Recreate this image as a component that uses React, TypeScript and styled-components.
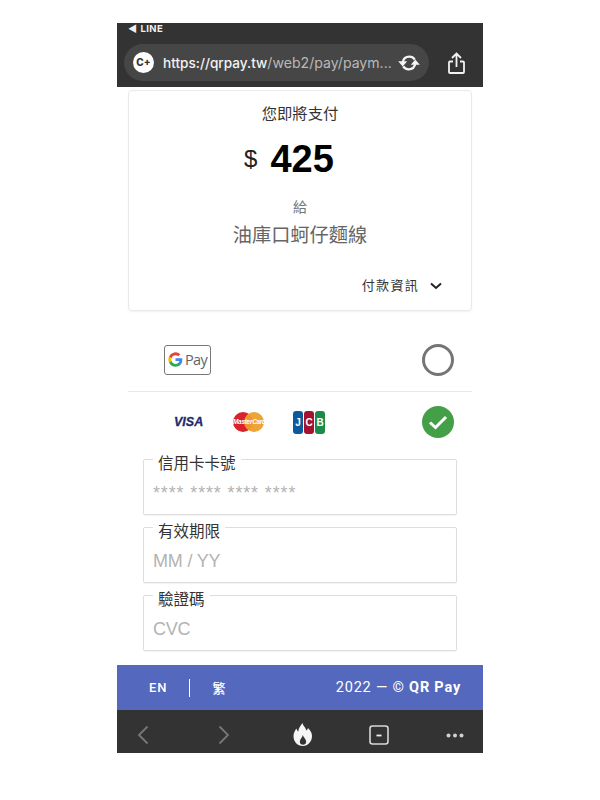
import styled, { createGlobalStyle } from 'styled-components'

const CJK = `"Liberation Sans", "Noto Sans CJK TC", sans-serif`

const GlobalStyle = createGlobalStyle`
  html, body {
    margin: 0;
    padding: 0;
    background: #fff;
    font-family: ${CJK};
  }
`

const Phone = styled.div`
  width: 366px;
  margin: 23px auto 0;
  display: flex;
  flex-direction: column;
`

const TopBar = styled.header`
  height: 64px;
  box-sizing: border-box;
  background: #333;
  padding: 0 7px;
`

const BackLine = styled.div`
  height: 21px;
  display: flex;
  align-items: flex-start;
  gap: 3px;
  padding-left: 4px;
  font-family: "Inter", sans-serif;
  font-size: 9.5px;
  line-height: 12px;
  font-weight: 700;
  letter-spacing: 0.4px;
  color: #f0f0f0;
`

const BarRow = styled.div`
  display: flex;
  align-items: center;
`

const UrlPill = styled.div`
  width: 305px;
  height: 37px;
  box-sizing: border-box;
  background: #464646;
  border-radius: 19px;
  display: flex;
  align-items: center;
  padding: 0 9px;
`

const Favicon = styled.span`
  width: 21px;
  height: 21px;
  border-radius: 50%;
  background: #fff;
  color: #333;
  font-family: "Inter", sans-serif;
  font-size: 10px;
  font-weight: 800;
  line-height: 21px;
  text-align: center;
  flex: none;
`

const Url = styled.div`
  margin-left: 9px;
  width: 236px;
  white-space: nowrap;
  font-family: "Inter", sans-serif;
  font-size: 14.1px;
  color: #b9b9b9;
  b {
    font-size: 13.6px;
    font-weight: 500;
    color: #f2f2f2;
  }
`

const BarIcon = styled.svg`
  display: block;
  flex: none;
`

const ShareButton = styled.div`
  margin-left: 19px;
  display: flex;
`

const Content = styled.main`
  padding: 3px 11px 0;
  display: flex;
  flex-direction: column;
`

const SummaryCard = styled.section`
  height: 221px;
  margin-bottom: 20px;
  box-sizing: border-box;
  border: 1px solid #e9e9e9;
  border-radius: 4px;
  box-shadow: 0 1px 2px rgba(0, 0, 0, 0.06);
  display: flex;
  flex-direction: column;
  align-items: center;
  padding-top: 13px;
`

const Lead = styled.div`
  font-size: 15.3px;
  line-height: 20px;
  color: #333;
`

const Amount = styled.div`
  margin: 15px 22px 0 0;
  display: flex;
  align-items: center;
  gap: 13px;
  height: 40px;
`

const Currency = styled.span`
  font-size: 24px;
  color: #222;
`

const Figure = styled.span`
  font-size: 38px;
  font-weight: 700;
  color: #000;
`

const To = styled.div`
  margin-top: 18px;
  font-size: 14px;
  line-height: 20px;
  color: #777;
`

const Merchant = styled.div`
  margin-top: 5px;
  font-size: 19.2px;
  line-height: 28px;
  color: #666;
`

const Details = styled.div`
  margin-top: 26px;
  align-self: flex-end;
  padding-right: 29px;
  display: flex;
  align-items: center;
  gap: 11px;
  font-size: 13px;
  line-height: 20px;
  letter-spacing: 1.3px;
  color: #333;
`

const PayRow = styled.div<{ $height: number; $divider?: boolean }>`
  height: ${({ $height }) => $height}px;
  box-sizing: border-box;
  display: flex;
  align-items: center;
  justify-content: space-between;
  padding: 0 18px ${({ $divider }) => ($divider ? '3px' : '0')} 36px;
  border-bottom: ${({ $divider }) => ($divider ? '1.5px solid #e8e8e8' : 'none')};
`

const GPayBadge = styled.div`
  width: 47px;
  height: 30px;
  box-sizing: border-box;
  border: 1px solid #777;
  border-radius: 3px;
  display: flex;
  align-items: center;
  justify-content: center;
  gap: 2px;
  font-family: "Open Sans", sans-serif;
  font-size: 14.5px;
  letter-spacing: -0.7px;
  color: #5f6368;
`

const Radio = styled.div`
  width: 32px;
  height: 32px;
  box-sizing: border-box;
  border: 3px solid #757575;
  border-radius: 50%;
`

const Brands = styled.div`
  display: flex;
  align-items: center;
  margin-left: 10px;
`

const Visa = styled.span`
  width: 30px;
  font-size: 12.5px;
  font-weight: 700;
  font-style: italic;
  -webkit-text-stroke: 0.3px #1f2a6b;
  color: #1f2a6b;
`

const MasterCard = styled.div`
  margin-left: 29px;
  width: 31px;
  height: 20px;
  position: relative;
  &::before, &::after {
    content: '';
    position: absolute;
    top: 0;
    width: 20px;
    height: 20px;
    border-radius: 50%;
  }
  &::before { left: 0; background: #d9222a; }
  &::after { right: 0; background: #ee9f2d; opacity: 0.95; }
  span {
    position: absolute;
    z-index: 1;
    left: 0;
    top: 6px;
    width: 31px;
    text-align: center;
    font-size: 6.5px;
    line-height: 8px;
    font-style: italic;
    font-weight: 700;
    letter-spacing: -0.3px;
    color: #fff;
    white-space: nowrap;
  }
`

const Jcb = styled.div`
  margin-left: 29px;
  display: flex;
  gap: 1px;
`

const JcbStripe = styled.span<{ $bg: string }>`
  width: 10px;
  height: 23px;
  border-radius: 3px;
  background: ${({ $bg }) => $bg};
  color: #fff;
  font-size: 10px;
  font-weight: 700;
  line-height: 23px;
  text-align: center;
`

const Fields = styled.div`
  margin: -4px 15px 0;
  display: flex;
  flex-direction: column;
  gap: 1px;
`

const Field = styled.fieldset`
  margin: 0;
  height: 67px;
  box-sizing: border-box;
  padding: 0 9px;
  border: 1px solid #ddd;
  border-radius: 2px;
  box-shadow: 0 1px 1px rgba(0, 0, 0, 0.05);
`

const Legend = styled.legend`
  margin-left: 0;
  padding: 8px 5px 0;
  font-size: 15.5px;
  line-height: 15px;
  color: #333;
`

const Placeholder = styled.div<{ $mask?: boolean }>`
  margin-top: 9px;
  font-size: 18px;
  line-height: 26px;
  letter-spacing: ${({ $mask }) => ($mask ? '0.85px' : '-0.2px')};
  color: #b3b3b3;
`

const Footer = styled.footer`
  margin-top: 14px;
  height: 45px;
  box-sizing: border-box;
  background: #5468bd;
  color: #fff;
  display: flex;
  align-items: center;
  padding: 0 22px 0 32px;
  font-family: "Roboto", "Noto Sans CJK TC", sans-serif;
`

const Lang = styled.span`
  font-size: 13px;
  font-weight: 500;
  letter-spacing: 1px;
`

const LangDivider = styled.span`
  width: 1px;
  height: 18px;
  background: #fff;
  margin: 0 23px 0 21px;
`

const Copyright = styled.div`
  margin-left: auto;
  font-size: 14.5px;
  letter-spacing: 0.8px;
  b {
    font-weight: 700;
  }
`

const BottomBar = styled.nav`
  height: 43px;
  box-sizing: border-box;
  padding: 7px 0 0 20px;
  background: #333;
  display: flex;
  align-items: center;
`

const NavSlot = styled.span<{ $gap: number }>`
  display: flex;
  margin-left: ${({ $gap }) => $gap}px;
`

export default function App() {
  return (
    <>
      <GlobalStyle />
      <Phone>
        <TopBar>
          <BackLine><span>◀</span> LINE</BackLine>
          <BarRow>
            <UrlPill>
              <Favicon>C+</Favicon>
              <Url><b>https://qrpay.tw</b>/web2/pay/paym...</Url>
              <BarIcon width="22" height="18" viewBox="0 0 24 20" fill="none">
                <path d="M5 9.500C5.600 5.500 8.600 3 12.400 3c2.700 0 4.700 1.200 6 3.200" stroke="#f5f5f5" strokeWidth="2.600" />
                <path d="M19 10.500c-.6 4-3.600 6.500-7.400 6.500-2.700 0-4.700-1.200-6-3.200" stroke="#f5f5f5" strokeWidth="2.600" />
                <path d="M0 8h10l-5 6zM24 12H14l5-6z" fill="#f5f5f5" />
              </BarIcon>
            </UrlPill>
            <ShareButton>
              <BarIcon width="17" height="22" viewBox="0 0 17 22" fill="none" stroke="#f2f2f2" strokeWidth="1.800">
                <path d="M8.500 15V2M4 6l4.500-4.500L13 6" />
                <path d="M5 9.500H2a1 1 0 0 0-1 1V20a1 1 0 0 0 1 1h13a1 1 0 0 0 1-1v-9.500a1 1 0 0 0-1-1h-3" />
              </BarIcon>
            </ShareButton>
          </BarRow>
        </TopBar>
        <Content>
          <SummaryCard>
            <Lead>您即將支付</Lead>
            <Amount>
              <Currency>$</Currency>
              <Figure>425</Figure>
            </Amount>
            <To>給</To>
            <Merchant>油庫口蚵仔麵線</Merchant>
            <Details>
              付款資訊
              <svg width="12" height="8" viewBox="0 0 12 8" fill="none" stroke="#222" strokeWidth="2">
                <path d="M1 1.500l5 4.500 5-4.500" />
              </svg>
            </Details>
          </SummaryCard>
          <PayRow $height={61} $divider>
            <GPayBadge>
              <svg width="15" height="15" viewBox="0 0 24 24">
                <path d="M23 12.300c0-.8-.1-1.600-.2-2.300H12v4.400h6.200a5.300 5.300 0 0 1-2.300 3.500v2.900h3.700c2.200-2 3.400-5 3.400-8.500z" fill="#4285f4" />
                <path d="M12 23.500c3.100 0 5.700-1 7.600-2.700l-3.700-2.900c-1 .7-2.300 1.100-3.900 1.100-3 0-5.500-2-6.400-4.700H1.800v3A11.500 11.500 0 0 0 12 23.500z" fill="#34a853" />
                <path d="M5.600 14.300a6.900 6.900 0 0 1 0-4.400v-3H1.800a11.500 11.500 0 0 0 0 10.400z" fill="#fbbc04" />
                <path d="M12 5.100c1.700 0 3.200.6 4.400 1.700l3.300-3.300A11.500 11.500 0 0 0 1.800 6.900l3.800 3C6.500 7.100 9 5.100 12 5.100z" fill="#ea4335" />
              </svg>
              Pay
            </GPayBadge>
            <Radio />
          </PayRow>
          <PayRow $height={60}>
            <Brands>
              <Visa>VISA</Visa>
              <MasterCard><span>MasterCard</span></MasterCard>
              <Jcb>
                <JcbStripe $bg="#0b5a9e">J</JcbStripe>
                <JcbStripe $bg="#a3122f">C</JcbStripe>
                <JcbStripe $bg="#1b8a4b">B</JcbStripe>
              </Jcb>
            </Brands>
            <svg width="32" height="32" viewBox="0 0 32 32">
              <circle cx="16" cy="16" r="16" fill="#43a047" />
              <path d="M8 16.500l5.500 5L24 11" fill="none" stroke="#fff" strokeWidth="3" />
            </svg>
          </PayRow>
          <Fields>
            <Field>
              <Legend>信用卡卡號</Legend>
              <Placeholder $mask>**** **** **** ****</Placeholder>
            </Field>
            <Field>
              <Legend>有效期限</Legend>
              <Placeholder>MM / YY</Placeholder>
            </Field>
            <Field>
              <Legend>驗證碼</Legend>
              <Placeholder>CVC</Placeholder>
            </Field>
          </Fields>
        </Content>
        <Footer>
          <Lang>EN</Lang>
          <LangDivider />
          <Lang>繁</Lang>
          <Copyright>2022 — © <b>QR Pay</b></Copyright>
        </Footer>
        <BottomBar>
          <NavSlot $gap={0}>
            <svg width="12" height="20" viewBox="0 0 12 20" fill="none" stroke="#777" strokeWidth="1.800">
              <path d="M10.500 1.500L2 10l8.500 8.500" />
            </svg>
          </NavSlot>
          <NavSlot $gap={69}>
            <svg width="12" height="20" viewBox="0 0 12 20" fill="none" stroke="#777" strokeWidth="1.800">
              <path d="M1.500 1.500L10 10l-8.500 8.500" />
            </svg>
          </NavSlot>
          <NavSlot $gap={63}>
            <svg width="20" height="24" viewBox="0 0 20 24">
              <path
                fillRule="evenodd"
                fill="#f5f5f5"
                d="M9.500 0C10 3 13 4.500 13.200 7.500C14 7 14.800 6 15 5C17.500 7.500 19 10 19 13C19 18.500 15 23 10 23C4.500 23 .5 19 .5 13C.5 10 2 7.500 3.500 5.500C3.800 7 4.500 8 5.300 8.500C5.500 5 7.500 2.500 9.500 0ZM9.800 12C9.500 14.500 6.800 16 6.800 18.800C6.800 20.800 8.300 21.800 10 21.800C11.700 21.800 13.200 20.800 13.200 18.800C13.200 16 10.500 14.500 9.800 12Z"
              />
            </svg>
          </NavSlot>
          <NavSlot $gap={56}>
            <svg width="20" height="20" viewBox="0 0 20 20" fill="none">
              <rect x="1" y="1" width="18" height="18" rx="2.500" stroke="#d8d8d8" strokeWidth="1.600" />
              <path d="M7.500 10.500h5" stroke="#f0f0f0" strokeWidth="1.800" />
            </svg>
          </NavSlot>
          <NavSlot $gap={57}>
            <svg width="18" height="5" viewBox="0 0 18 5" fill="#d0d0d0">
              <circle cx="2.500" cy="2.500" r="2" />
              <circle cx="9" cy="2.500" r="2" />
              <circle cx="15.500" cy="2.500" r="2" />
            </svg>
          </NavSlot>
        </BottomBar>
      </Phone>
    </>
  )
}
